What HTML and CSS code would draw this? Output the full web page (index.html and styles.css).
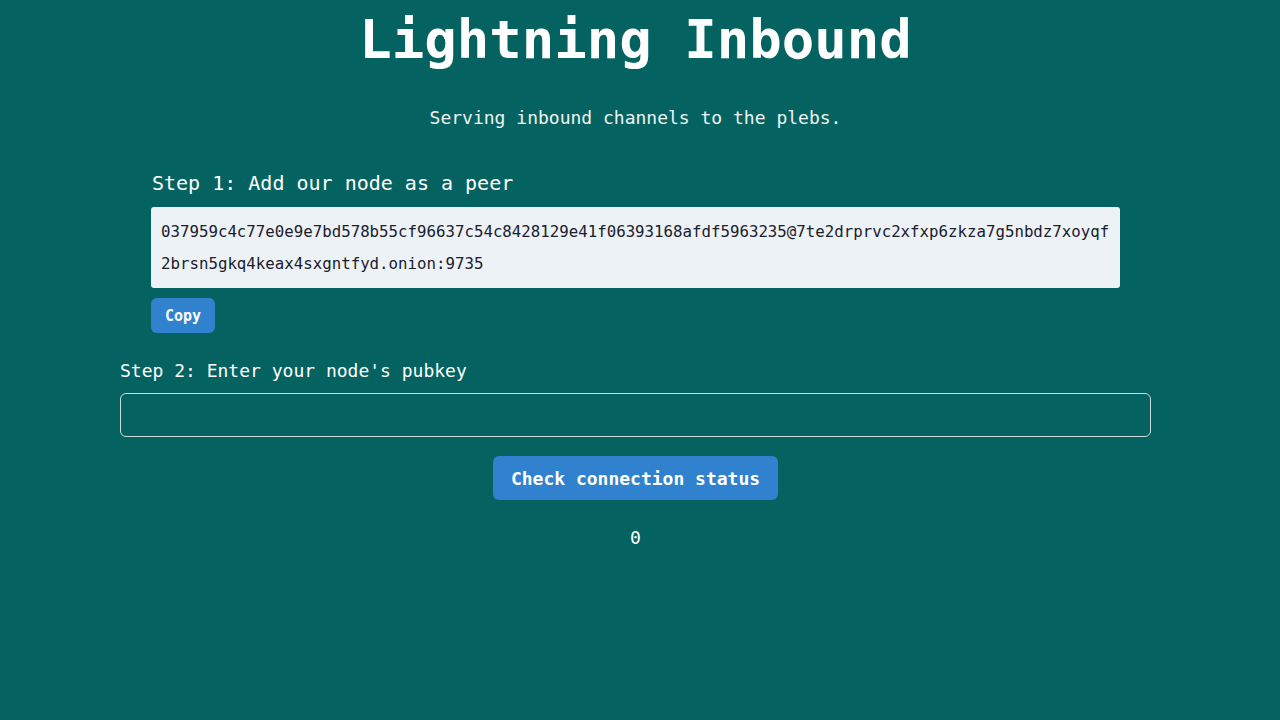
FILE: index.html
```html
<!DOCTYPE html>
<html lang="en">
<head>
<meta charset="utf-8">
<title>Lightning Inbound</title>
<link rel="stylesheet" href="styles.css">
</head>
<body>
<main class="page">
  <h1 class="title">Lightning Inbound</h1>
  <p class="subtitle">Serving inbound channels to the plebs.</p>
  <section class="step1">
    <h2 class="step1-label">Step 1: Add our node as a peer</h2>
    <div class="uri">037959c4c77e0e9e7bd578b55cf96637c54c8428129e41f06393168afdf5963235@7te2drprvc2xfxp6zkza7g5nbdz7xoyqf2brsn5gkq4keax4sxgntfyd.onion:9735</div>
    <button class="btn btn-copy" type="button">Copy</button>
  </section>
  <section class="step2">
    <label class="step2-label" for="pubkey">Step 2: Enter your node's pubkey</label>
    <input class="pubkey" id="pubkey" type="text">
    <div class="actions">
      <button class="btn btn-check" type="button">Check connection status</button>
    </div>
    <p class="result">0</p>
  </section>
</main>
</body>
</html>
```
FILE: styles.css
```css
html, body {
  background: #046360;
}
body {
  margin: 0 9px 0 0;
  font-family: "DejaVu Sans Mono", "Liberation Mono", monospace;
  color: #ffffff;
}
.page {
  width: 1031px;
  margin: 0 auto;
  display: flex;
  flex-direction: column;
}
.title {
  margin: 8px 0 0;
  font-size: 54px;
  line-height: 64px;
  font-weight: 700;
  text-align: center;
}
.subtitle {
  margin: 34px 0 0;
  font-size: 18px;
  line-height: 24px;
  text-align: center;
  color: #f0f4f4;
}
.step1 {
  margin: 41px 31px 0;
  display: flex;
  flex-direction: column;
  align-items: flex-start;
}
.step1-label {
  margin: 0 0 0 1px;
  font-size: 20px;
  font-weight: 400;
  line-height: 24px;
}
.uri {
  margin-top: 12px;
  box-sizing: border-box;
  width: 100%;
  padding: 9px 9px 8px 10px;
  background: #edf2f7;
  color: #1a202c;
  border-radius: 3px;
  font-size: 15.75px;
  line-height: 32px;
  word-break: break-all;
}
.btn {
  font-family: inherit;
  font-weight: 700;
  color: #ffffff;
  background: #3182ce;
  border: none;
  border-radius: 6px;
  cursor: pointer;
}
.btn-copy {
  margin-top: 10px;
  height: 35px;
  padding: 0 14px;
  font-size: 15px;
}
.step2 {
  margin-top: 25px;
  display: flex;
  flex-direction: column;
}
.step2-label {
  padding-top: 1px;
  font-size: 18px;
  line-height: 24px;
}
.pubkey {
  margin-top: 10px;
  box-sizing: border-box;
  width: 100%;
  height: 44px;
  background: transparent;
  border: 1px solid #c9dcdb;
  border-radius: 6px;
  color: #ffffff;
  font-family: inherit;
  font-size: 16px;
  padding: 0 12px;
}
.actions {
  margin-top: 19px;
  display: flex;
  justify-content: center;
}
.btn-check {
  height: 44px;
  padding: 0 18px;
  font-size: 18px;
}
.result {
  margin: 26px 0 0;
  text-align: center;
  font-size: 18px;
  line-height: 24px;
}
```
